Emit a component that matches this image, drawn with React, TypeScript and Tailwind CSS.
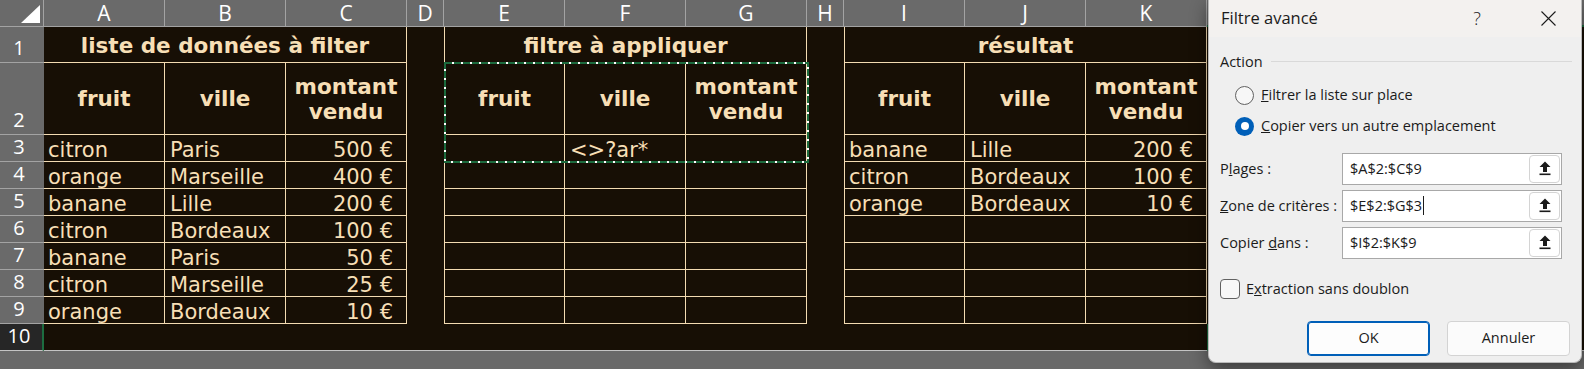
import type { ReactNode } from "react";

const columns = ["A", "B", "C", "D", "E", "F", "G", "H", "I", "J", "K"];

const source = [
  ["citron", "Paris", "500 €"],
  ["orange", "Marseille", "400 €"],
  ["banane", "Lille", "200 €"],
  ["citron", "Bordeaux", "100 €"],
  ["banane", "Paris", "50 €"],
  ["citron", "Marseille", "25 €"],
  ["orange", "Bordeaux", "10 €"],
];

const result = [
  ["banane", "Lille", "200 €"],
  ["citron", "Bordeaux", "100 €"],
  ["orange", "Bordeaux", "10 €"],
];

const textCell =
  "flex items-end whitespace-nowrap border-r border-b border-[#f3dbb2] text-[21px] leading-[22px]";
const headCell =
  "flex items-center justify-center text-center border-r border-b border-[#f3dbb2] font-bold text-[21.5px] leading-[25px]";
const titleCell =
  "col-span-3 flex items-center justify-center border-r border-b border-[#f3dbb2] pt-[3px] font-bold text-[21.5px] leading-none";

function RowHeader({ n }: { n: number }) {
  return (
    <div className="flex items-end justify-center border-b border-[#a3a3a3] bg-[#6a6a6a] pr-[6px] pb-[3px] font-['Open_Sans',sans-serif] text-[20px] leading-[22px] text-white">
      {n}
    </div>
  );
}

function DataRow({ n, left, filter, right }: { n: number; left: string[]; filter: string; right?: string[] }) {
  return (
    <>
      <RowHeader n={n} />
      <div className={`${textCell} pl-[4px]`}>{left[0]}</div>
      <div className={`${textCell} pl-[5px]`}>{left[1]}</div>
      <div className={`${textCell} justify-end pr-[13px]`}>{left[2]}</div>
      <div />
      <div className={`${textCell} border-l`} />
      <div className={`${textCell} pl-[5px]`}>{filter}</div>
      <div className={textCell} />
      <div />
      <div className={`${textCell} border-l pl-[4px]`}>{right?.[0]}</div>
      <div className={`${textCell} pl-[5px]`}>{right?.[1]}</div>
      <div className={`${textCell} justify-end pr-[13px]`}>{right?.[2]}</div>
      <div />
    </>
  );
}

function Headings({ first, ants }: { first?: boolean; ants?: boolean }) {
  return (
    <>
      <div className={`${headCell} relative ${first ? "border-l" : ""}`}>
        fruit
        {ants ? (
          <svg className="pointer-events-none absolute -left-px -top-px z-10" width="365" height="101">
            <rect x="1" y="1" width="363" height="99" fill="none" stroke="#ffffff" strokeWidth="2" />
            <rect x="1" y="1" width="363" height="99" fill="none" stroke="#1b6a3d" strokeWidth="2" strokeDasharray="7 2" />
          </svg>
        ) : null}
      </div>
      <div className={headCell}>ville</div>
      <div className={headCell}>
        montant
        <br />
        vendu
      </div>
    </>
  );
}

function UploadIcon() {
  return (
    <svg width="12" height="15" viewBox="0 0 12 15">
      <path d="M6 0.5 L11.5 6 H8 V11 H4 V6 H0.5 Z" fill="#1b1b1b" />
      <rect x="0.5" y="12.5" width="11" height="1.6" fill="#1b1b1b" />
    </svg>
  );
}

function RangeField({ label, value, caret }: { label: ReactNode; value: string; caret?: boolean }) {
  return (
    <div className="flex h-[32px] items-center">
      <span className="w-[133px] pl-[11px]">{label}</span>
      <div className="flex h-full w-[220px] items-center justify-between border border-[#a8a8a8] bg-white pl-[7px] pr-px">
        <span className="flex items-center">
          {value}
          {caret ? <span className="ml-px h-[19px] w-px bg-[#1b1b1b]" /> : null}
        </span>
        <button
          type="button"
          className="flex h-[28px] w-[31px] items-center justify-center rounded-[4px] border border-[#d4d4d4] bg-white"
        >
          <UploadIcon />
        </button>
      </div>
    </div>
  );
}

function Dialog() {
  return (
    <div className="absolute left-[1208px] top-0 flex h-[363px] w-[374px] flex-col overflow-hidden rounded-b-[8px] border border-t-0 border-[#b9b9b9] bg-[#efefef] font-['Open_Sans',sans-serif] text-[14.5px] text-[#1b1b1b] shadow-[0_6px_18px_rgba(0,0,0,0.45)]">
      <div className="flex h-[37px] shrink-0 items-center bg-[#f3f1ef] pl-[12px]">
        <span className="flex-1 text-[16.5px]">Filtre avancé</span>
        <span className="mr-[23px] w-[30px] text-center text-[18px] font-light">?</span>
        <span className="flex w-[66px] items-center justify-center">
          <svg width="15" height="15" viewBox="0 0 15 15">
            <path d="M0.5 0.5 L14.5 14.5 M14.5 0.5 L0.5 14.5" stroke="#1b1b1b" strokeWidth="1.1" />
          </svg>
        </span>
      </div>

      <div className="mt-[14px] flex items-center pl-[11px] pr-[9px]">
        <span>Action</span>
        <span className="ml-[8px] h-px flex-1 bg-[#d9d9d9]" />
      </div>

      <div className="mt-[12px] flex h-[21px] items-center pl-[26px]">
        <span className="h-[19px] w-[19px] rounded-full border border-[#616161] bg-[#f7f7f7]" />
        <span className="ml-[7px]">
          <u>F</u>iltrer la liste sur place
        </span>
      </div>
      <div className="mt-[10px] flex h-[21px] items-center pl-[26px]">
        <span className="flex h-[19px] w-[19px] items-center justify-center rounded-full bg-[#005fb8]">
          <span className="h-[8px] w-[8px] rounded-full bg-white" />
        </span>
        <span className="ml-[7px]">
          <u>C</u>opier vers un autre emplacement
        </span>
      </div>

      <div className="mt-[16px] flex flex-col gap-[5px]">
        <RangeField
          label={
            <>
              P<u>l</u>ages :
            </>
          }
          value="$A$2:$C$9"
        />
        <RangeField
          label={
            <>
              <u>Z</u>one de critères :
            </>
          }
          value="$E$2:$G$3"
          caret
        />
        <RangeField
          label={
            <>
              Copier <u>d</u>ans :
            </>
          }
          value="$I$2:$K$9"
        />
      </div>

      <div className="mt-[20px] flex h-[20px] items-center pl-[11px]">
        <span className="h-[20px] w-[20px] rounded-[4px] border border-[#616161] bg-[#f7f7f7]" />
        <span className="ml-[6px]">
          E<u>x</u>traction sans doublon
        </span>
      </div>

      <div className="mt-[22px] flex gap-[17px] pl-[98px]">
        <button
          type="button"
          className="h-[35px] w-[123px] rounded-[4px] border border-[#005fb8] bg-[#fdfdfd] shadow-[inset_0_0_0_1px_#005fb8]"
        >
          OK
        </button>
        <button
          type="button"
          className="h-[35px] w-[123px] rounded-[4px] border border-[#d3d3d3] bg-[#fbfbfb]"
        >
          Annuler
        </button>
      </div>
    </div>
  );
}

export default function App() {
  return (
    <div className="relative h-[369px] w-[1584px] overflow-hidden bg-[#696969]">
      <div className="grid grid-cols-[44px_121px_121px_121px_37px_121px_121px_121px_37px_121px_121px_121px_1fr] grid-rows-[27px_36px_72px_repeat(8,27px)] bg-[#170f05] font-['DejaVu_Sans',sans-serif] text-[#f7dfb6]">
        {/* column headers */}
        <div className="flex items-end justify-end border-r border-b border-[#a3a3a3] bg-[#6a6a6a] pr-[3px] pb-[3px]">
          <svg width="19" height="18" viewBox="0 0 19 18">
            <path d="M19 0 V18 H0 Z" fill="#ffffff" />
          </svg>
        </div>
        {columns.map((c) => (
          <div
            key={c}
            className="flex items-center justify-center border-r border-b border-[#a3a3a3] bg-[#6a6a6a] font-['Open_Sans',sans-serif] text-[21px] leading-none text-white"
          >
            {c}
          </div>
        ))}
        {/* column L, hidden under the dialog */}
        <div className="border-b-2 border-b-[#1d6d40] bg-[#6a6a6a]" />

        {/* row 1 */}
        <RowHeader n={1} />
        <div className={titleCell}>liste de données à filter</div>
        <div />
        <div className={`${titleCell} border-l`}>filtre à appliquer</div>
        <div />
        <div className={`${titleCell} border-l`}>résultat</div>
        <div />

        {/* row 2 */}
        <RowHeader n={2} />
        <Headings />
        <div />
        <Headings first ants />
        <div />
        <Headings first />
        <div />

        {source.map((row, i) => (
          <DataRow key={i} n={i + 3} left={row} filter={i === 0 ? "<>?ar*" : ""} right={result[i]} />
        ))}

        {/* row 10 */}
        <div className="flex items-end justify-center border-r-2 border-b border-r-[#1d6d40] border-b-[#c4c4c4] bg-[#262626] pr-[4px] pb-[3px] font-['Open_Sans',sans-serif] text-[20px] leading-[22px] text-white">
          10
        </div>
        <div className="col-span-11 border-b border-[#c4c4c4]" />
        <div className="border-b border-l-2 border-b-[#c4c4c4] border-l-[#1d6d40]" />
      </div>

      <Dialog />
    </div>
  );
}
